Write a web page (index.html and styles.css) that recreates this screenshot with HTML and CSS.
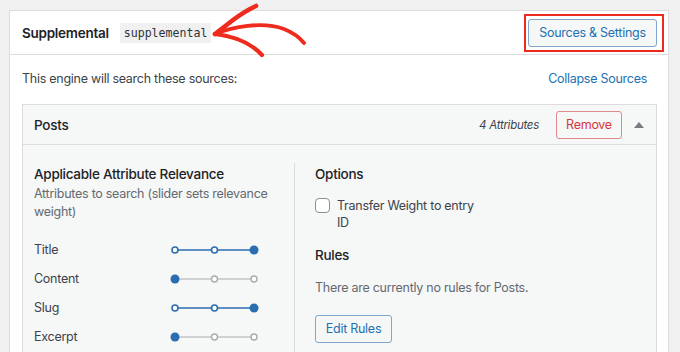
FILE: index.html
```html
<!DOCTYPE html>
<html lang="en">
<head>
<meta charset="utf-8">
<title>Engine</title>
<link rel="stylesheet" href="styles.css">
</head>
<body>
<div class="card">
  <div class="card-head">
    <span class="engine-title">Supplemental</span>
    <code class="engine-slug">supplemental</code>
    <div class="highlight">
      <button class="btn btn-primaryish">Sources &amp; Settings</button>
    </div>
  </div>
  <div class="sources-bar">
    <span class="sources-note">This engine will search these sources:</span>
    <a class="link">Collapse Sources</a>
  </div>
  <div class="source">
    <div class="source-head">
      <span class="source-name">Posts</span>
      <span class="attr-count">4 Attributes</span>
      <button class="btn btn-remove">Remove</button>
      <span class="toggle"></span>
    </div>
    <div class="source-body">
      <div class="col col-attrs">
        <h3 class="col-title">Applicable Attribute Relevance</h3>
        <p class="col-desc">Attributes to search (slider sets relevance weight)</p>
        <div class="attr-list">
          <div class="attr-row">
            <span class="attr-label">Title</span>
            <svg class="slider" width="94" height="12" viewBox="0 0 94 12"><line x1="5" y1="6" x2="84" y2="6" stroke="#2a6db0" stroke-width="1.6"/><circle cx="5" cy="6" r="3" fill="#fff" stroke="#2a6db0" stroke-width="1.6"/><circle cx="44.5" cy="6" r="3" fill="#fff" stroke="#2a6db0" stroke-width="1.6"/><circle cx="84" cy="6" r="4.5" fill="#2a6db0"/></svg>
          </div>
          <div class="attr-row">
            <span class="attr-label">Content</span>
            <svg class="slider" width="94" height="12" viewBox="0 0 94 12"><line x1="5" y1="6" x2="84" y2="6" stroke="#c3c4c7" stroke-width="1.6"/><circle cx="44.5" cy="6" r="3" fill="#fff" stroke="#a7aaad" stroke-width="1.4"/><circle cx="84" cy="6" r="3" fill="#fff" stroke="#a7aaad" stroke-width="1.4"/><circle cx="5" cy="6" r="4.5" fill="#2a6db0"/></svg>
          </div>
          <div class="attr-row">
            <span class="attr-label">Slug</span>
            <svg class="slider" width="94" height="12" viewBox="0 0 94 12"><line x1="5" y1="6" x2="84" y2="6" stroke="#2a6db0" stroke-width="1.6"/><circle cx="5" cy="6" r="3" fill="#fff" stroke="#2a6db0" stroke-width="1.6"/><circle cx="44.5" cy="6" r="3" fill="#fff" stroke="#2a6db0" stroke-width="1.6"/><circle cx="84" cy="6" r="4.5" fill="#2a6db0"/></svg>
          </div>
          <div class="attr-row">
            <span class="attr-label">Excerpt</span>
            <svg class="slider" width="94" height="12" viewBox="0 0 94 12"><line x1="5" y1="6" x2="84" y2="6" stroke="#c3c4c7" stroke-width="1.6"/><circle cx="44.5" cy="6" r="3" fill="#fff" stroke="#a7aaad" stroke-width="1.4"/><circle cx="84" cy="6" r="3" fill="#fff" stroke="#a7aaad" stroke-width="1.4"/><circle cx="5" cy="6" r="4.5" fill="#2a6db0"/></svg>
          </div>
        </div>
      </div>
      <div class="col col-opts">
        <h3 class="col-title">Options</h3>
        <label class="option">
          <span class="checkbox"></span>
          <span class="option-text">Transfer Weight to entry ID</span>
        </label>
        <h3 class="col-title rules-title">Rules</h3>
        <p class="rules-note">There are currently no rules for Posts.</p>
        <button class="btn btn-edit">Edit Rules</button>
      </div>
    </div>
  </div>
</div>
<svg class="annotation-arrow" width="680" height="64" viewBox="0 0 680 64">
  <g fill="none" stroke="#ef2b1e" stroke-linecap="round" stroke-linejoin="round">
    <path d="M215 34 C 232 27, 262 21, 284 29 C 294 33, 300 38, 304 43" stroke-width="3.8"/>
    <path d="M215 34 L 233 20 Q 245 11 256 6" stroke-width="4.6"/>
    <path d="M215 34 C 232 36, 250 42, 262 55" stroke-width="4.2"/>
  </g>
</svg>
</body>
</html>
```

FILE: styles.css
```css
* { box-sizing: border-box; }
html, body { margin: 0; padding: 0; }
body {
  background: #f0f0f1;
  font-family: Inter, "Liberation Sans", Arial, sans-serif;
  font-size: 12.5px;
  letter-spacing: -0.27px;
  color: #1d2327;
  width: 680px;
  height: 352px;
  overflow: hidden;
  position: relative;
}
.card {
  margin: 10px 11px 0 9px;
  background: #fff;
  border: 1px solid #dcdcde;
  border-bottom: none;
  height: 342px;
}
.card-head {
  height: 44px;
  display: flex;
  align-items: center;
  padding: 0 11px 0 12px;
  border-bottom: 1px solid #dcdcde;
}
.engine-title {
  font-size: 13.5px;
  font-weight: 600;
}
.engine-slug {
  margin-left: 11px;
  background: #f0f0f1;
  font-family: "DejaVu Sans Mono", "Liberation Mono", monospace;
  font-size: 11.6px;
  letter-spacing: 0;
  padding: 2px 4px;
  line-height: 16px;
  color: #2c3338;
}
.highlight {
  margin-left: auto;
  position: relative;
}
.highlight::after {
  content: "";
  position: absolute;
  top: -5px;
  left: -4px;
  right: -7px;
  bottom: -5px;
  border: 2px solid #ee2a1e;
}
.btn {
  font-family: inherit;
  font-size: 12.5px;
  letter-spacing: -0.27px;
  background: #f6f7f7;
  border-radius: 3px;
  height: 28px;
  padding: 0 10px;
  line-height: 26px;
  cursor: pointer;
}
.btn-primaryish {
  width: 129px;
  color: #2271b1;
  border: 1px solid #7fa6cc;
  padding: 0;
}
.sources-bar {
  display: flex;
  justify-content: space-between;
  padding: 15px 21px 16px 12px;
  line-height: 18px;
}
.sources-note { color: #3c434a; }
.link { color: #2271b1; }
.source {
  margin: 0 11px 0 12px;
  border: 1px solid #dcdcde;
  border-bottom: none;
  background: #f6f7f7;
  height: 260px;
}
.source-head {
  height: 40px;
  display: flex;
  align-items: center;
  padding: 0 11px 0 11px;
  border-bottom: 1px solid #dcdcde;
}
.source-name {
  font-size: 13.5px;
  font-weight: 500;
  margin-right: auto;
}
.attr-count {
  font-style: italic;
  font-size: 11.5px;
  color: #3c434a;
}
.btn-remove {
  margin-left: 17px;
  width: 66px;
  padding: 0;
  color: #d63638;
  border: 1px solid #e0898a;
  background: #f6f7f7;
}
.toggle {
  margin-left: 12px;
  width: 0;
  height: 0;
  border-left: 5px solid transparent;
  border-right: 5px solid transparent;
  border-bottom: 6px solid #787c82;
  margin-right: 1px;
}
.source-body {
  display: grid;
  grid-template-columns: 272px 1fr;
  padding-top: 18px;
}
.col-attrs {
  border-right: 1px solid #dcdcde;
  padding-left: 11px;
  height: 200px;
}
.col-opts {
  padding-left: 20px;
}
.col-title {
  margin: 0;
  font-size: 13.5px;
  font-weight: 500;
  line-height: 20px;
  padding-top: 1px;
}
.col-desc {
  margin: 1px 0 0;
  color: #646970;
  line-height: 18px;
  width: 250px;
}
.attr-list {
  margin-top: 14px;
}
.attr-row {
  display: flex;
  align-items: center;
  height: 29px;
}
.attr-label {
  width: 136px;
  color: #3c434a;
}
.slider { display: block; }
.option {
  display: flex;
  align-items: flex-start;
  margin-top: 13px;
}
.checkbox {
  width: 15px;
  height: 15px;
  border: 1px solid #8c8f94;
  border-radius: 4px;
  background: #fff;
  margin-top: 1px;
  flex: none;
}
.option-text {
  margin-left: 7px;
  width: 145px;
  line-height: 17px;
  color: #3c434a;
}
.rules-title {
  margin-top: 13px;
}
.rules-note {
  margin: 14px 0 0;
  line-height: 18px;
  color: #646970;
}
.btn-edit {
  margin-top: 18px;
  width: 77px;
  padding: 0;
  color: #2271b1;
  border: 1px solid #7fa6cc;
}
.annotation-arrow {
  position: absolute;
  top: 0;
  left: 0;
  pointer-events: none;
}
```
